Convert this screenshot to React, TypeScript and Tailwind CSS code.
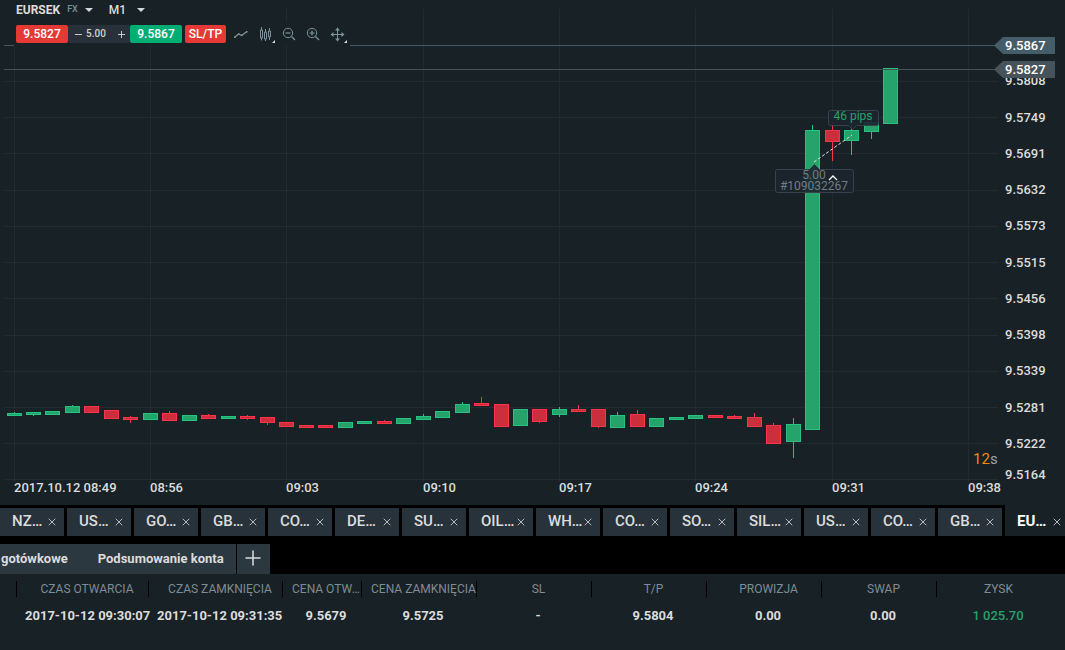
import React from "react";
import { Plus, X } from "lucide-react";

type Candle = {
  up: boolean;
  top: number;
  bottom: number;
  high: number;
  low: number;
};

// [direction, body top, body bottom, high, low]
const rawCandles: [string, number, number, number, number][] = [
  ["g", 413, 416, 412, 416],
  ["g", 412, 415, 412, 416],
  ["g", 411, 415, 411, 415],
  ["g", 406, 413, 405, 413],
  ["r", 406, 413, 406, 413],
  ["r", 410, 419, 410, 419],
  ["r", 417, 420, 416, 423],
  ["g", 413, 420, 413, 420],
  ["r", 413, 421, 411, 421],
  ["g", 415, 421, 415, 421],
  ["r", 415, 419, 414, 419],
  ["g", 416, 419, 416, 419],
  ["r", 416, 419, 415, 420],
  ["r", 417, 423, 417, 425],
  ["r", 422, 427, 422, 427],
  ["r", 425, 428, 425, 428],
  ["r", 425, 428, 425, 428],
  ["g", 422, 428, 422, 428],
  ["g", 421, 424, 421, 424],
  ["r", 421, 424, 420, 424],
  ["g", 418, 424, 418, 424],
  ["g", 416, 420, 414, 420],
  ["g", 411, 418, 411, 418],
  ["g", 404, 413, 402, 413],
  ["r", 403, 406, 397, 406],
  ["r", 404, 427, 404, 427],
  ["g", 409, 426, 409, 426],
  ["r", 409, 422, 409, 423],
  ["g", 409, 415, 407, 417],
  ["r", 409, 412, 405, 412],
  ["r", 409, 427, 409, 428],
  ["g", 415, 428, 412, 428],
  ["r", 414, 427, 410, 427],
  ["g", 418, 427, 418, 427],
  ["g", 417, 420, 417, 420],
  ["g", 415, 419, 415, 419],
  ["r", 415, 418, 415, 418],
  ["r", 416, 419, 415, 419],
  ["r", 417, 427, 413, 427],
  ["r", 425, 444, 423, 444],
  ["g", 424, 442, 418, 458],
  ["g", 130, 430, 125, 430],
  ["r", 130, 142, 122, 161],
  ["g", 130, 141, 124, 155],
  ["g", 122, 132, 118, 139],
  ["g", 68, 124, 68, 124],
];

const candles: Candle[] = rawCandles.map(([dir, top, bottom, high, low]) => ({
  up: dir === "g",
  top,
  bottom,
  high,
  low,
}));

const prices = [
  { label: "9.5808", y: 81, textY: 85 },
  { label: "9.5749", y: 117, textY: 122 },
  { label: "9.5691", y: 153, textY: 158 },
  { label: "9.5632", y: 190, textY: 194 },
  { label: "9.5573", y: 226, textY: 230 },
  { label: "9.5515", y: 262, textY: 267 },
  { label: "9.5456", y: 298, textY: 303 },
  { label: "9.5398", y: 335, textY: 339 },
  { label: "9.5339", y: 371, textY: 375 },
  { label: "9.5281", y: 407, textY: 412 },
  { label: "9.5222", y: 443, textY: 448 },
  { label: "9.5164", y: 479, textY: 479 },
];

const times = [
  { label: "2017.10.12 08:49", x: 14 },
  { label: "08:56", x: 150 },
  { label: "09:03", x: 286 },
  { label: "09:10", x: 423 },
  { label: "09:17", x: 559 },
  { label: "09:24", x: 695 },
  { label: "09:31", x: 832 },
  { label: "09:38", x: 968 },
];

const tabs = ["NZ…", "US…", "GO…", "GB…", "CO…", "DE…", "SU…", "OIL…", "WH…", "CO…", "SO…", "SIL…", "US…", "CO…", "GB…", "EU…"];

const columns = [
  { title: "CZAS OTWARCIA", value: "2017-10-12 09:30:07", width: 132 },
  { title: "CZAS ZAMKNIĘCIA", value: "2017-10-12 09:31:35", width: 134 },
  { title: "CENA OTWARCIA", value: "9.5679", width: 79, narrow: true },
  { title: "CENA ZAMKNIĘCIA", value: "9.5725", width: 115 },
  { title: "SL", value: "-", width: 115 },
  { title: "T/P", value: "9.5804", width: 115 },
  { title: "PROWIZJA", value: "0.00", width: 115 },
  { title: "SWAP", value: "0.00", width: 115 },
  { title: "ZYSK", value: "1 025.70", width: 115, profit: true },
];

export default function App() {
  return (
    <div className="min-h-screen bg-[#172126] font-['Roboto',sans-serif] text-[#dcdcdc]">
      <main className="grid">
        <div className="col-start-1 row-start-1">
          <Chart />
        </div>
        <div className="z-10 col-start-1 row-start-1 justify-self-start self-start pl-[14px]">
          <Toolbar />
        </div>
      </main>
      <InstrumentTabs />
      <AccountTabs />
      <PositionsTable />
    </div>
  );
}

function Caret() {
  return (
    <svg width="8" height="4" viewBox="0 0 8 4" aria-hidden="true">
      <path d="M0 0h8L4 4z" fill="#d5d8da" />
    </svg>
  );
}

function Toolbar() {
  return (
    <div>
      <div className="flex h-[22px] w-[138px] items-center bg-[#172126] pb-[2px] pl-[2px]">
        <button className="flex items-center gap-[7px] text-[12px] font-bold">
          EURSEK
          <span className="text-[9px] font-medium text-[#7d8d96]">FX</span>
          <Caret />
        </button>
        <button className="ml-4 flex items-center gap-[11px] text-[12px] font-medium">
          M1
          <Caret />
        </button>
      </div>
      <div className="flex h-6 items-center bg-[#172126] pb-px pl-[2px] text-[12px] font-medium text-white">
        <button className="h-[18px] w-[52px] rounded-[2px] bg-[#e53935] leading-[18px]">9.5827</button>
        <div className="flex h-[18px] w-[62px] items-center bg-[#283139] pr-1 pl-[7px] text-[#d0d3d5]">
          <button aria-label="Mniej">
            <svg width="8" height="8" viewBox="0 0 8 8"><path d="M0 4.5h7" stroke="#c5c9cc" /></svg>
          </button>
          <input aria-label="Wolumen" defaultValue="5.00" className="ml-[3px] w-6 bg-transparent text-[10px] outline-none" />
          <button aria-label="Więcej" className="ml-auto">
            <svg width="8" height="8" viewBox="0 0 8 8"><path d="M0 4.5h7M3.5 1v7" stroke="#c5c9cc" /></svg>
          </button>
        </div>
        <button className="h-[18px] w-[52px] rounded-[2px] bg-[#00ae73] leading-[18px]">9.5867</button>
        <button className="ml-[3px] h-[18px] w-[41px] rounded-[2px] bg-[#e53935] leading-[18px]">SL/TP</button>
        <div className="flex items-center gap-[6px] pr-[3px] pl-[7px] text-[#7f939d]">
          <button aria-label="Typ wykresu">
            <ToolIcon>
              <path d="M1.5 12.5l4-3.5 3 1.5 5.5-4" strokeWidth="1.2" />
              <path d="M1 11.5h1.5v1.5H1zM5 8.5h1.5V10H5zM8 9.5h1.5V11H8zM13 6h1.5v1.5H13z" fill="currentColor" stroke="none" />
            </ToolIcon>
          </button>
          <button aria-label="Świece">
            <ToolIcon menu>
              <path d="M4.500 2v3M4.500 13v2.500M8.500 4v3M8.500 14v2M12.500 3v3M12.500 12v3" />
              <path d="M3.500 5h2v8h-2zM7.500 7h2v7h-2zM11.500 6h2v6h-2z" />
            </ToolIcon>
          </button>
          <button aria-label="Pomniejsz">
            <ToolIcon>
              <circle cx="7" cy="8" r="4.700" />
              <path d="M4.500 8h5" strokeWidth="1.2" />
              <path d="M10.500 11.500l3.500 3.500" strokeWidth="1.3" />
            </ToolIcon>
          </button>
          <button aria-label="Powiększ">
            <ToolIcon>
              <circle cx="7" cy="8" r="4.700" />
              <path d="M4.500 8h5M7 5.500v5" strokeWidth="1.2" />
              <path d="M10.500 11.500l3.500 3.500" strokeWidth="1.3" />
            </ToolIcon>
          </button>
          <button aria-label="Przesuń">
            <ToolIcon menu>
              <path d="M8.500 4v11M3 9.500h11" />
              <path d="M8.500 2.500l2.500 3H6zM8.500 16.500l2.500-3H6zM1.500 9.500l3-2.500v5zM15.500 9.500l-3-2.500v5z" fill="currentColor" stroke="none" />
            </ToolIcon>
          </button>
        </div>
      </div>
    </div>
  );
}

function ToolIcon({ children, menu }: { children: React.ReactNode; menu?: boolean }) {
  return (
    <svg width="18" height="18" viewBox="0 0 18 18" fill="none" stroke="currentColor" aria-hidden="true">
      {children}
      {menu && <path d="M18 15v3h-3z" fill="#dcdcdc" stroke="none" />}
    </svg>
  );
}

function Chart() {
  return (
    <svg viewBox="0 0 1065 505" className="block h-auto w-full" role="img" aria-label="EURSEK M1">
      <g stroke="#212b31" shapeRendering="crispEdges">
        {prices.map((p) => (
          <line key={p.y} x1="4" x2="998" y1={p.y + 0.5} y2={p.y + 0.5} />
        ))}
        {times.map((t) => (
          <line key={t.x} x1={t.x + 0.5} x2={t.x + 0.5} y1="9" y2="482" />
        ))}
      </g>

      <g shapeRendering="crispEdges">
        {candles.map((c, i) => {
          const x = Math.floor(7 + i * 19.48);
          const line = c.up ? "#26c281" : "#ff3347";
          return (
            <g key={i}>
              <rect x={x + 7} y={c.high} width="1" height={c.low - c.high} fill={line} />
              <rect x={x + 0.5} y={c.top + 0.5} width="14" height={c.bottom - c.top - 1} fill={c.up ? "#26a26b" : "#cb2e3c"} stroke={line} />
            </g>
          );
        })}
      </g>

      {/* ask / bid lines */}
      <path d="M4 45.500H996" stroke="#455a66" shapeRendering="crispEdges" />
      <path d="M4 69.500H996" stroke="#46525a" shapeRendering="crispEdges" />

      <g fill="#dcdcdc" fontSize="13" fontWeight="500">
        {prices.map((p) => (
          <text key={p.label} x="1005" y={p.textY}>
            {p.label}
          </text>
        ))}
        {times.map((t) => (
          <text key={t.label} x={t.x} y="492">
            {t.label}
          </text>
        ))}
      </g>

      <path d="M994 45.500l9-8.500h52v17h-52z" fill="#455d69" />
      <path d="M994 69.500l9-8.500h52v17h-52z" fill="#46535b" />
      <g fill="#ffffff" fontSize="13" fontWeight="500">
        <text x="1005" y="50">9.5867</text>
        <text x="1005" y="74">9.5827</text>
      </g>

      <text x="973" y="464" fontSize="15" fill="#ef8a0c">
        12<tspan fill="#9aa4aa">s</tspan>
      </text>

      {/* closed position markers */}
      <path d="M830.500 110.500h46a2 2 0 0 1 2 2v11a2 2 0 0 1-2 2h-20l-4 4-4-4h-18a2 2 0 0 1-2-2v-11a2 2 0 0 1 2-2z" fill="#1c252d" fillOpacity="0.9" stroke="#37434c" />
      <text x="853" y="120" fontSize="12" textAnchor="middle" fill="#26a26b">46 pips</text>
      <path d="M777.500 169.500h32l5-5 5 5h32a2 2 0 0 1 2 2v19a2 2 0 0 1-2 2h-74a2 2 0 0 1-2-2v-19a2 2 0 0 1 2-2z" fill="#1c252d" fillOpacity="0.9" stroke="#37434c" />
      <path d="M814 162L852 135" stroke="#e0e0e0" strokeDasharray="3 2" />
      <g fontSize="12" textAnchor="middle" fill="#737b81">
        <text x="814" y="179">5.00</text>
        <text x="814" y="190">#109032267</text>
      </g>
      <path d="M829 180l4-4 4 4" fill="none" stroke="#ffffff" strokeWidth="1.3" />
    </svg>
  );
}

function InstrumentTabs() {
  return (
    <nav className="flex gap-[3px] overflow-hidden bg-black pt-[3px] pb-2">
      {tabs.map((tab, i) => {
        const active = i === tabs.length - 1;
        return (
          <div
            key={i}
            className={
              active
                ? "-mt-[3px] flex h-[31px] w-16 shrink-0 items-center justify-between bg-[#172126] pt-[3px] pr-[6px] pl-3"
                : "flex h-7 w-16 shrink-0 items-center justify-between bg-[#28323a] pr-[6px] pl-3"
            }
          >
            <button className={active ? "pb-[2px] text-[15px] font-bold text-white" : "pb-[2px] text-[15px] font-medium"}>{tab}</button>
            <button aria-label="Zamknij">
              <X size={12} strokeWidth={2} className="text-[#b4babd]" />
            </button>
          </div>
        );
      })}
    </nav>
  );
}

function AccountTabs() {
  return (
    <div className="flex h-[30px] gap-px bg-black text-[13px] font-bold">
      <div className="flex items-center gap-[30px] bg-[#2c3840] pr-3 pl-px">
        <button>gotówkowe</button>
        <button>Podsumowanie konta</button>
      </div>
      <button aria-label="Dodaj" className="flex w-[33px] items-center justify-center bg-[#2c3840] pb-[2px]">
        <Plus size={24} strokeWidth={1.5} />
      </button>
    </div>
  );
}

function PositionsTable() {
  return (
    <table className="w-full table-fixed text-center text-[13px]">
      <colgroup>
        <col className="w-4" />
        {columns.map((c) => (
          <col key={c.title} style={{ width: c.width }} />
        ))}
        <col className="w-[14px]" />
      </colgroup>
      <thead>
        <tr className="h-[30px] text-[12px] text-[#7f8c94]">
          <td />
          {columns.map((c) => (
            <th key={c.title} scope="col" className="p-0 font-normal">
              <div className="h-4 border-l border-black pl-[9px] leading-4">
                <div className={c.narrow ? "truncate" : "whitespace-nowrap"}>{c.title}</div>
              </div>
            </th>
          ))}
          <td />
        </tr>
      </thead>
      <tbody>
        <tr className="h-6 font-bold">
          <td />
          {columns.map((c) => (
            <td key={c.title} className={c.profit ? "p-0 pl-[9px] font-medium whitespace-nowrap text-[#26a26b]" : "p-0 pl-[9px] whitespace-nowrap"}>
              {c.value}
            </td>
          ))}
          <td />
        </tr>
      </tbody>
    </table>
  );
}
